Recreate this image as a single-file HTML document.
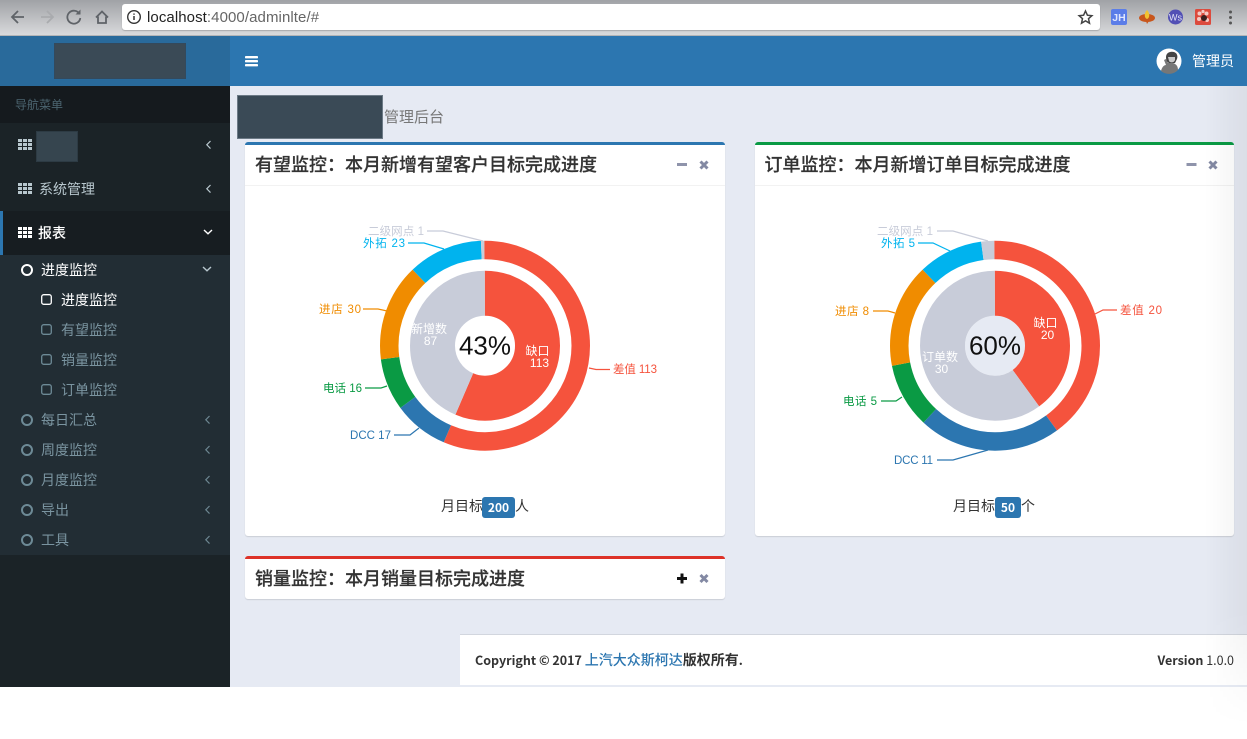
<!DOCTYPE html>
<html lang="zh"><head><meta charset="utf-8"><title>管理后台</title>
<style>
*{box-sizing:border-box}
html,body{margin:0;padding:0;width:1247px;height:739px;overflow:hidden;background:#fff;font-family:"Liberation Sans","Noto Sans CJK SC",sans-serif}
.abs,.abs>*{position:absolute}
#chrome{left:0;top:0;width:1247px;height:36px;background:linear-gradient(#a0a2a6,#d9dadc);border-bottom:1px solid #b4b5b7}
#url{position:absolute;left:122px;top:4px;width:978px;height:26px;background:#fff;border-radius:3px;box-shadow:0 1px 1px rgba(0,0,0,.2)}
#url span{position:absolute;left:25px;top:5px;font-size:15px;line-height:18px;color:#666;white-space:nowrap;letter-spacing:.08px}
#url b{font-weight:400;color:#222}
#hdr{position:absolute;left:0;top:36px;width:1247px;height:50px;background:#2c76b0}
#logo{position:absolute;left:0;top:36px;width:230px;height:50px;background:#296a9b}
.blk{position:absolute;background:#3a4a56;border:1px solid #33495c}
#side{position:absolute;left:0;top:86px;width:230px;height:601px;background:#1b2327}
#main{position:absolute;left:230px;top:86px;width:1017px;height:601px;background:#e6eaf3}
.sec{position:absolute;left:0;width:230px}
.t{position:absolute;font-size:14px;line-height:20px;white-space:nowrap;color:#7a94a0}
.box{position:absolute;background:#fff;border-radius:3px;border-top:3px solid #2c76b0;box-shadow:0 1px 1px rgba(0,0,0,.12)}
.bt{position:absolute;left:10px;top:6px;font-size:18px;line-height:26px;font-weight:500;color:#333;white-space:nowrap;-webkit-text-stroke:.2px #333;font-family:"Noto Sans CJK SC","Liberation Sans",sans-serif}
.hr{position:absolute;left:0;right:0;top:40px;height:1px;background:#f2f2f2}
.cap{position:absolute;font-size:14px;line-height:20px;color:#333;white-space:nowrap}
.badge{display:inline-block;background:#2c76b0;color:#fff;font-weight:700;font-size:12px;line-height:21px;height:21px;border-radius:3px;text-align:center;vertical-align:-1px;font-family:"Noto Sans CJK SC","Liberation Sans",sans-serif}
#foot{position:absolute;left:460px;top:634px;width:787px;height:51px;background:#fff;border-top:1px solid #d2d6de}
#foot div{position:absolute;top:15px;font-size:14px;line-height:20px;color:#333;white-space:nowrap;font-family:"Noto Sans CJK SC","Liberation Sans",sans-serif}
#foot i{font-style:normal;font-size:12.5px}
svg{position:absolute;left:0;top:0;overflow:visible}
svg text{font-family:"Liberation Sans","Noto Sans CJK SC",sans-serif}
</style></head>
<body>
<div id="chrome" class="abs"><div id="url"><span><b>localhost</b>:4000/adminlte/#</span></div></div>
<div id="hdr"></div><div id="logo"></div>
<div class="blk" style="left:54px;top:43px;width:132px;height:36px"></div>
<div id="main"></div>
<div id="side">
 <div class="sec" style="top:0;height:37px;background:#151a1e"></div>
 <div class="sec" style="top:125px;height:44px;background:#171d21"></div>
 <div class="sec" style="top:125px;height:44px;width:3px;background:#2c76b0"></div>
 <div class="sec" style="top:169px;height:300px;background:#222d34"></div>
 <div class="t" style="left:15px;top:9px;font-size:12px;color:#4b646f">导航菜单</div>
 <div class="blk" style="left:36px;top:45px;width:42px;height:31px;background:#36454f;border-color:#2d3b44"></div>
 <div class="t" style="left:39px;top:93px;color:#b8c7ce">系统管理</div>
 <div class="t" style="left:38px;top:137px;color:#fff;font-weight:500">报表</div>
 <div class="t" style="left:41px;top:174px;color:#fff">进度监控</div>
 <div class="t" style="left:61px;top:204px;color:#fff">进度监控</div>
 <div class="t" style="left:61px;top:234px">有望监控</div>
 <div class="t" style="left:61px;top:264px">销量监控</div>
 <div class="t" style="left:61px;top:294px">订单监控</div>
 <div class="t" style="left:41px;top:324px">每日汇总</div>
 <div class="t" style="left:41px;top:354px">周度监控</div>
 <div class="t" style="left:41px;top:384px">月度监控</div>
 <div class="t" style="left:41px;top:414px">导出</div>
 <div class="t" style="left:41px;top:444px">工具</div>
</div>
<div class="blk" style="left:237px;top:95px;width:146px;height:44px;border-color:#6c7a86"></div>
<div class="t" style="left:384px;top:108px;font-size:15px;color:#777">管理后台</div>

<div class="box" style="left:245px;top:142px;width:480px;height:394px">
 <div class="bt">有望监控：本月新增有望客户目标完成进度</div><div class="hr"></div>
 <div class="cap" style="left:196px;top:351px">月目标<span class="badge" style="width:33px;margin-left:-1px">200</span>人</div>
</div>
<div class="box" style="left:755px;top:142px;width:479px;height:394px;border-top-color:#0a9a44">
 <div class="bt" style="left:9.5px">订单监控：本月新增订单目标完成进度</div><div class="hr"></div>
 <div class="cap" style="left:198px;top:351px">月目标<span class="badge" style="width:26px">50</span>个</div>
</div>
<div class="box" style="left:245px;top:556px;width:480px;height:43px;border-top-color:#dd3228">
 <div class="bt">销量监控：本月销量目标完成进度</div>
</div>
<div id="foot">
 <div style="left:15px"><b><i>Copyright © 2017 </i><span style="color:#2c76b0;font-weight:500">上汽大众斯柯达</span>版权所有<i>.</i></b></div>
 <div style="right:13px"><i><b>Version</b> 1.0.0</i></div>
</div>

<svg width="1247" height="739" viewBox="0 0 1247 739" fill="none">
 <defs>
  <g id="th"><path d="M0 0h4v3H0zM5 0h4v3H5zM10 0h4v3h-4zM0 4h4v3H0zM5 4h4v3H5zM10 4h4v3h-4zM0 8h4v3H0zM5 8h4v3H5zM10 8h4v3h-4z"/></g>
  <path id="cl" d="M4.5 0 L0.8 3.8 L4.5 7.6" stroke-width="1.2"/>
  <path id="cd" d="M0 0 L4 3.8 L8 0" stroke-width="1.4"/>
  <linearGradient id="vg" x1="0" x2="1" y1="0" y2="0"><stop offset="0" stop-color="#000" stop-opacity="0"/><stop offset="1" stop-color="#000" stop-opacity=".05"/></linearGradient>
  <linearGradient id="vf" x1="0" x2="0" y1="0" y2="1"><stop offset="0" stop-color="#fff"/><stop offset=".82" stop-color="#fff"/><stop offset="1" stop-color="#000"/></linearGradient>
  <mask id="vm" maskUnits="userSpaceOnUse" x="1205" y="86" width="42" height="640"><rect x="1205" y="86" width="42" height="640" fill="url(#vf)"/></mask>
 </defs>

 <!-- browser toolbar -->
 <g stroke="#5f6368" stroke-width="1.8">
  <path d="M24 17H12M18 11l-6 6 6 6"/>
  <path d="M53 17H41M47 11l6 6-6 6" stroke="#a9abae"/>
  <path d="M79.5 14a6.5 6.5 0 1 0 .8 4"/>
  <path d="M80.5 9.5v5h-5" fill="#5f6368" stroke="none"/>
  <path d="M96 17.5l6-6 6 6M98 16.500v6.500h8v-6.500"/>
 </g>
 <circle cx="134" cy="17" r="6.3" stroke="#333" stroke-width="1.4"/>
 <path d="M134 16v4M134 13.500v1.300" stroke="#333" stroke-width="1.5"/>
 <path d="M1085.5 11l1.900 4.200 4.500.5-3.400 3 1 4.500-4-2.300-4 2.300 1-4.500-3.400-3 4.500-.5z" stroke="#444" stroke-width="1.5"/>
 <rect x="1111" y="9" width="16" height="16" rx="2" fill="#5b7de8"/>
 <text x="1119" y="21" font-size="10.5" font-weight="700" fill="#dfe6ff" text-anchor="middle">JH</text>
 <ellipse cx="1147" cy="18" rx="8" ry="4" fill="#c8561c"/>
 <path d="M1147 10c3 3 3 8 0 9c-3-1-3-6 0-9z" fill="#f2c230"/>
 <path d="M1146 21l1 3 2-3z" fill="#c8561c"/>
 <circle cx="1175.5" cy="17" r="7.5" fill="#5250b5"/>
 <text x="1175.5" y="20.5" font-size="9" fill="#e4e4f6" text-anchor="middle">Ws</text>
 <rect x="1195" y="9" width="16" height="16" rx="1.5" fill="#dc4a3d"/>
 <g fill="#f4c9c4"><circle cx="1199.5" cy="13.5" r="2"/><circle cx="1206.5" cy="13.5" r="2"/><circle cx="1199" cy="19" r="2"/><circle cx="1207" cy="20" r="2"/><circle cx="1203" cy="11.5" r="1.6"/></g>
 <circle cx="1204" cy="18" r="3" fill="#3a2020"/>
 <g fill="#555"><circle cx="1230.5" cy="12" r="1.5"/><circle cx="1230.5" cy="17.5" r="1.5"/><circle cx="1230.5" cy="23" r="1.5"/></g>

 <!-- header -->
 <g fill="#fff"><rect x="245" y="56" width="13" height="2.4" rx=".8"/><rect x="245" y="60" width="13" height="2.4" rx=".8"/><rect x="245" y="64" width="13" height="2.4" rx=".8"/></g>
 <circle cx="1169" cy="61" r="12.5" fill="#fff"/>
 <path d="M1161 71c1-4 3-6 5-6l-2-5 2-1 2 4h5c3 1 5 3 5 7a12.500 12.500 0 0 1-17 1z" fill="#777"/>
 <path d="M1166 57c0-4 4-6 8-5 3 1 4 4 3 7l-2 4h-6c-2-1-3-3-3-6z" fill="#444"/>
 <path d="M1168 57h7v3c-1 3-5 3-6 1z" fill="#c9c9c9"/>
 <text x="1192" y="66" font-size="14" fill="#fff">管理员</text>

 <!-- sidebar icons -->
 <use href="#th" x="18" y="139" fill="#b8c7ce"/>
 <use href="#th" x="18" y="183" fill="#b8c7ce"/>
 <use href="#th" x="18" y="227" fill="#fff"/>
 <g stroke="#b8c7ce" fill="none">
  <use href="#cl" x="206" y="141"/><use href="#cl" x="206" y="185"/>
  <use href="#cd" x="204" y="230" stroke="#fff"/><use href="#cd" x="203" y="267" stroke="#b8c7ce"/>
 </g>
 <g stroke="#6d8691" fill="none">
  <use href="#cl" x="205" y="416"/><use href="#cl" x="205" y="446"/><use href="#cl" x="205" y="476"/><use href="#cl" x="205" y="506"/><use href="#cl" x="205" y="536"/>
 </g>
 <g fill="none" stroke-width="2">
  <circle cx="27" cy="270" r="5" stroke="#fff"/>
  <circle cx="27" cy="420" r="5" stroke="#6d8a96"/><circle cx="27" cy="450" r="5" stroke="#6d8a96"/><circle cx="27" cy="480" r="5" stroke="#6d8a96"/><circle cx="27" cy="510" r="5" stroke="#6d8a96"/><circle cx="27" cy="540" r="5" stroke="#6d8a96"/>
 </g>
 <g fill="none" stroke-width="1.3">
  <rect x="41.7" y="294.7" width="9.6" height="9.6" rx="2" stroke="#fff"/>
  <rect x="41.7" y="324.7" width="9.6" height="9.6" rx="2" stroke="#6d8a96"/>
  <rect x="41.7" y="354.7" width="9.6" height="9.6" rx="2" stroke="#6d8a96"/>
  <rect x="41.7" y="384.7" width="9.6" height="9.6" rx="2" stroke="#6d8a96"/>
 </g>

 <!-- box tools -->
 <g fill="#8f94ab">
  <rect x="677" y="163" width="10" height="3"/><rect x="1186.5" y="163" width="10" height="3"/>
 </g>
 <g stroke="#8389a3" stroke-width="3">
  <path d="M700.5 161.5l7 7M707.5 161.5l-7 7"/><path d="M1209.5 161.5l7 7M1216.5 161.5l-7 7"/><path d="M700.5 575l7 7M707.5 575l-7 7"/>
 </g>
 <path d="M677 577h10v3h-10zM680.500 573.500h3v10h-3z" fill="#111"/>

 <!-- chart 1 -->
 <g transform="rotate(-90 485 345.7)" fill="none">
  <g stroke-width="18.5">
   <circle cx="485" cy="345.7" r="95.75" pathLength="200" stroke="#f5533d" stroke-dasharray="113 87"/>
   <circle cx="485" cy="345.7" r="95.75" pathLength="200" stroke="#2c76b0" stroke-dasharray="17 183" stroke-dashoffset="-113"/>
   <circle cx="485" cy="345.7" r="95.75" pathLength="200" stroke="#0a9a44" stroke-dasharray="16 184" stroke-dashoffset="-130"/>
   <circle cx="485" cy="345.7" r="95.75" pathLength="200" stroke="#f08c00" stroke-dasharray="30 170" stroke-dashoffset="-146"/>
   <circle cx="485" cy="345.7" r="95.75" pathLength="200" stroke="#00b3ee" stroke-dasharray="23 177" stroke-dashoffset="-176"/>
   <circle cx="485" cy="345.7" r="95.75" pathLength="200" stroke="#c8ccd9" stroke-dasharray="1 199" stroke-dashoffset="-199"/>
  </g>
  <g stroke-width="45">
   <circle cx="485" cy="345.7" r="52.5" pathLength="200" stroke="#f5533d" stroke-dasharray="113 87"/>
   <circle cx="485" cy="345.7" r="52.5" pathLength="200" stroke="#c8ccd9" stroke-dasharray="87 113" stroke-dashoffset="-113"/>
  </g>
 </g>
 <g fill="none" stroke-width="1.2">
  <path d="M427 231H443L483 241" stroke="#c8ccd9"/>
  <path d="M408 243H424L444 249" stroke="#00b3ee"/>
  <path d="M363 309H378L387 311" stroke="#f08c00"/>
  <path d="M365 388H381L387 386" stroke="#0a9a44"/>
  <path d="M394 435H410L419 428" stroke="#2c76b0"/>
  <path d="M589 368L596 369.5H610" stroke="#f5533d"/>
 </g>
 <g font-size="11.5">
  <text x="424" y="235" text-anchor="end" fill="#c8ccd9" textLength="56">二级网点 1</text>
  <text x="405" y="247" text-anchor="end" fill="#00b3ee" textLength="42">外拓 23</text>
  <text x="361" y="313" text-anchor="end" fill="#f08c00" textLength="42">进店 30</text>
  <text x="362" y="392" text-anchor="end" fill="#0a9a44" textLength="39">电话 16</text>
  <text x="391" y="439" text-anchor="end" fill="#2c76b0" textLength="41">DCC 17</text>
  <text x="613" y="373" fill="#f5533d" textLength="44">差值 113</text>
  <g fill="#fff" text-anchor="middle" font-size="12">
   <text x="537.5" y="355">缺口</text><text x="539.5" y="367">113</text>
   <text x="429" y="333">新增数</text><text x="430.5" y="345">87</text>
  </g>
 </g>
 <text x="485" y="354.5" font-size="26" fill="#111" text-anchor="middle">43%</text>

 <!-- chart 2 -->
 <g transform="rotate(-90 995 345.7)" fill="none">
  <g stroke-width="18.5">
   <circle cx="995" cy="345.7" r="95.75" pathLength="50" stroke="#f5533d" stroke-dasharray="20 30"/>
   <circle cx="995" cy="345.7" r="95.75" pathLength="50" stroke="#2c76b0" stroke-dasharray="11 39" stroke-dashoffset="-20"/>
   <circle cx="995" cy="345.7" r="95.75" pathLength="50" stroke="#0a9a44" stroke-dasharray="5 45" stroke-dashoffset="-31"/>
   <circle cx="995" cy="345.7" r="95.75" pathLength="50" stroke="#f08c00" stroke-dasharray="8 42" stroke-dashoffset="-36"/>
   <circle cx="995" cy="345.7" r="95.75" pathLength="50" stroke="#00b3ee" stroke-dasharray="5 45" stroke-dashoffset="-44"/>
   <circle cx="995" cy="345.7" r="95.75" pathLength="50" stroke="#c8ccd9" stroke-dasharray="1 49" stroke-dashoffset="-49"/>
  </g>
  <circle cx="995" cy="345.7" r="30" fill="#e6eaf3"/>
  <g stroke-width="45">
   <circle cx="995" cy="345.7" r="52.5" pathLength="50" stroke="#f5533d" stroke-dasharray="20 30"/>
   <circle cx="995" cy="345.7" r="52.5" pathLength="50" stroke="#c8ccd9" stroke-dasharray="30 20" stroke-dashoffset="-20"/>
  </g>
 </g>
 <g fill="none" stroke-width="1.2">
  <path d="M937 231H953L988 241" stroke="#c8ccd9"/>
  <path d="M918 243H933L950 251" stroke="#00b3ee"/>
  <path d="M873 311H888L895 313" stroke="#f08c00"/>
  <path d="M881 401H896L902 397" stroke="#0a9a44"/>
  <path d="M937 460H953L988 450" stroke="#2c76b0"/>
  <path d="M1095 314L1103 310H1117" stroke="#f5533d"/>
 </g>
 <g font-size="11.5">
  <text x="933" y="235" text-anchor="end" fill="#c8ccd9" textLength="56">二级网点 1</text>
  <text x="915" y="247" text-anchor="end" fill="#00b3ee" textLength="34">外拓 5</text>
  <text x="869" y="315" text-anchor="end" fill="#f08c00" textLength="34">进店 8</text>
  <text x="877" y="405" text-anchor="end" fill="#0a9a44" textLength="34">电话 5</text>
  <text x="933" y="464" text-anchor="end" fill="#2c76b0" textLength="39">DCC 11</text>
  <text x="1120" y="314" fill="#f5533d" textLength="42">差值 20</text>
  <g fill="#fff" text-anchor="middle" font-size="12">
   <text x="1045.5" y="327">缺口</text><text x="1047.5" y="339">20</text>
   <text x="940" y="361">订单数</text><text x="941.5" y="373">30</text>
  </g>
 </g>
 <text x="995" y="354.5" font-size="26" fill="#111" text-anchor="middle">60%</text>

 <!-- right-edge window shadow -->
 <rect x="1205" y="86" width="42" height="640" fill="url(#vg)" mask="url(#vm)"/>
</svg>
</body></html>
